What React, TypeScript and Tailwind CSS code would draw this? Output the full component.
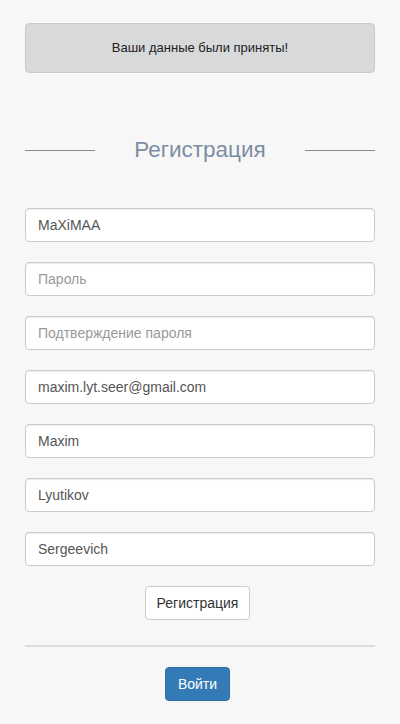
import React from 'react';

const fields = [
  { value: 'MaXiMAA', placeholder: 'Логин' },
  { value: '', placeholder: 'Пароль', type: 'password' },
  { value: '', placeholder: 'Подтверждение пароля', type: 'password' },
  { value: 'maxim.lyt.seer@gmail.com', placeholder: 'Email' },
  { value: 'Maxim', placeholder: 'Имя' },
  { value: 'Lyutikov', placeholder: 'Фамилия' },
  { value: 'Sergeevich', placeholder: 'Отчество' },
];

export default function App() {
  return (
    <div
      className="min-h-[724px] bg-[#f7f7f7] px-[25px] pt-[23px]"
      style={{ fontFamily: '"Liberation Sans", Arial, sans-serif' }}
    >
      {/* Alert */}
      <div className="flex h-[50px] items-center justify-center rounded-[4px] border border-[#c8c9ca] bg-[#d8d9da] text-[13px] text-[#222]">
        Ваши данные были приняты!
      </div>

      {/* Title */}
      <div className="mt-[52px] flex items-center">
        <div className="h-px w-[70px] bg-[#8a8a8a]" />
        <h2 className="flex-1 text-center text-[22.5px] leading-[50px] text-[#7b8ea3]">Регистрация</h2>
        <div className="h-px w-[70px] bg-[#8a8a8a]" />
      </div>

      {/* Form */}
      <form className="mt-[33px] flex flex-col gap-[20px]">
        {fields.map((f, i) => (
          <input
            key={i}
            type={f.type ?? 'text'}
            defaultValue={f.value}
            placeholder={f.placeholder}
            className="h-[34px] w-full rounded-[4px] border border-[#ccc] bg-white px-[12px] text-[14px] text-[#555] shadow-[inset_0_1px_1px_rgba(0,0,0,0.075)] outline-none placeholder:text-[#999]"
          />
        ))}
      </form>

      <div className="mt-[20px] flex justify-center pr-[5px]">
        <button className="h-[34px] rounded-[4px] border border-[#ccc] bg-white px-[11px] text-[14px] text-[#333]">
          Регистрация
        </button>
      </div>

      <div className="mt-[25px] h-[2px] bg-[#ddd]" />

      <div className="mt-[20px] flex justify-center pr-[5px]">
        <button className="h-[34px] rounded-[4px] border border-[#2e6da4] bg-[#337ab7] px-[12px] text-[14px] text-white">
          Войти
        </button>
      </div>
    </div>
  );
}
